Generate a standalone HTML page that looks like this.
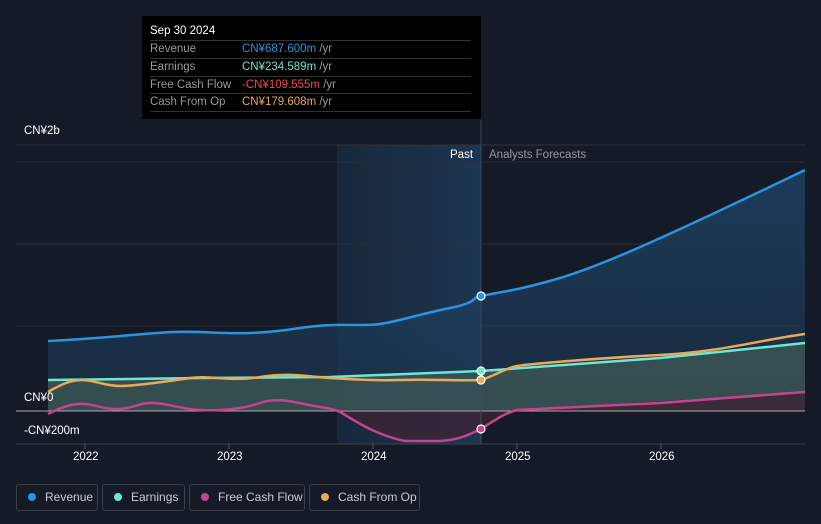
<!DOCTYPE html>
<html><head><meta charset="utf-8"><style>
body{margin:0;background:#151b26;width:821px;height:524px;overflow:hidden;font-family:"Liberation Sans",sans-serif;position:relative}
.t{position:absolute;font-size:11.5px;color:#fff;white-space:nowrap}
.tip{position:absolute;left:142px;top:16px;width:339px;height:103px;background:#000}
.tip .r{position:absolute;left:8px;width:321px;font-size:11.5px;color:#999;border-top:1px solid #333;height:17px;line-height:17px;white-space:nowrap}
.tip .r span{position:absolute;left:92px}
.lg{position:absolute;top:484px;height:27px;border:1px solid #3a3f4a;border-radius:3px;font-size:12px;color:#ccc;line-height:25px;box-sizing:border-box;white-space:nowrap}
.lg i{position:absolute;left:11px;top:8px;width:8px;height:8px;border-radius:50%}
.lg b{font-weight:normal;position:absolute;left:28px}
</style></head><body>
<svg width="821" height="524" style="position:absolute;left:0;top:0">
<defs>
<linearGradient id="rg" x1="0" y1="0" x2="0" y2="1"><stop offset="0" stop-color="#1f4a70" stop-opacity=".7"/><stop offset="1" stop-color="#1b3550" stop-opacity=".6"/></linearGradient>
<linearGradient id="hg" x1="0" y1="0" x2="1" y2="0"><stop offset="0" stop-color="#17273a"/><stop offset="1" stop-color="#1d3650"/></linearGradient>
</defs>
<rect x="337" y="145" width="144" height="299" fill="url(#hg)"/>
<line x1="16" y1="145" x2="805" y2="145" stroke="#2c3340"/>
<line x1="16" y1="162" x2="805" y2="162" stroke="#262c38"/>
<line x1="16" y1="244" x2="805" y2="244" stroke="#262c38"/>
<line x1="16" y1="326" x2="805" y2="326" stroke="#262c38"/>
<line x1="16" y1="444" x2="805" y2="444" stroke="#3a404c"/>
<path d="M48,341 C120,338 160,330 200,332 S260,334 300,328 S360,327 380,324 S420,314 450,308 S470,298 481,296 C500,292 520,290 560,278 S660,240 805,170 L805,411 L48,411Z" fill="url(#rg)"/>
<path d="M48,380 L200,378 L330,377 L481,371 L660,358 L805,343 L805,411 L48,411Z" fill="#3e5a55" opacity=".75"/>
<path d="M335,410 C350,418 370,430 405,441 L440,441 C460,440 470,434 481,429 C495,420 505,413 517,410 L805,392 L805,411 Z" fill="#3a2434" opacity=".8"/>
<line x1="16" y1="411" x2="805" y2="411" stroke="#aaa" stroke-width="1"/>
<line x1="481" y1="120" x2="481" y2="444" stroke="#3a4a5c"/>
<path d="M48,341 C120,338 160,330 200,332 S260,334 300,328 S360,327 380,324 S420,314 450,308 S470,298 481,296 C500,292 520,290 560,278 S660,240 805,170" fill="none" stroke="#2b94e0" stroke-width="2.5"/>
<path d="M48,380 L200,378 L330,377 L481,371 L660,358 L805,343" fill="none" stroke="#6ee6d2" stroke-width="2.5"/>
<path d="M48,392 C60,385 70,380 82,380 S105,386 120,386 S170,381 190,378 S230,382 260,377 S310,377 330,378 S370,381 400,380 S460,381 481,380 C495,376 505,368 517,366 S600,358 660,355 S760,340 805,334" fill="none" stroke="#e9a95a" stroke-width="2.5"/>
<path d="M48,414 C60,408 72,403 85,404 S105,410 120,409 S140,402 155,403 S180,409 200,410 S240,410 260,403 S300,404 320,407 S340,412 350,418 S380,436 405,441 L440,441 C460,440 470,434 481,429 C495,420 505,413 517,410 L660,403 L805,392" fill="none" stroke="#c8448a" stroke-width="2.5"/>
<circle cx="481" cy="296" r="4" fill="#2b94e0" stroke="#fff" stroke-width="1.2"/>
<circle cx="481" cy="371" r="4" fill="#6ee6d2" stroke="#fff" stroke-width="1.2"/>
<circle cx="481" cy="380" r="4" fill="#e9a95a" stroke="#fff" stroke-width="1.2"/>
<circle cx="481" cy="429" r="4" fill="#c8448a" stroke="#fff" stroke-width="1.2"/>
<g stroke="#555"><line x1="85" y1="444" x2="85" y2="449"/><line x1="229" y1="444" x2="229" y2="449"/><line x1="373" y1="444" x2="373" y2="449"/><line x1="517" y1="444" x2="517" y2="449"/><line x1="661" y1="444" x2="661" y2="449"/></g>
</svg>
<div class="t" style="left:24px;top:125px">CN¥2b</div>
<div class="t" style="left:24px;top:392px">CN¥0</div>
<div class="t" style="left:24px;top:425px">-CN¥200m</div>
<div class="t" style="left:450px;top:149px">Past</div>
<div class="t" style="left:489px;top:149px;color:#999">Analysts Forecasts</div>
<div class="t" style="left:73px;top:451px">2022</div>
<div class="t" style="left:217px;top:451px">2023</div>
<div class="t" style="left:361px;top:451px">2024</div>
<div class="t" style="left:505px;top:451px">2025</div>
<div class="t" style="left:649px;top:451px">2026</div>
<div class="tip">
<div style="position:absolute;left:8px;top:9px;font-size:11.5px;color:#fff">Sep 30 2024</div>
<div class="r" style="top:24px">Revenue<span style="color:#2b94e0">CN¥687.600m <em style="font-style:normal;color:#999">/yr</em></span></div>
<div class="r" style="top:42px">Earnings<span style="color:#6ee6d2">CN¥234.589m <em style="font-style:normal;color:#999">/yr</em></span></div>
<div class="r" style="top:60px">Free Cash Flow<span style="color:#f04848">-CN¥109.555m <em style="font-style:normal;color:#999">/yr</em></span></div>
<div class="r" style="top:77px;border-bottom:1px solid #333">Cash From Op<span style="color:#e9a95a">CN¥179.608m <em style="font-style:normal;color:#999">/yr</em></span></div>
</div>
<div class="lg" style="left:16px;width:82px"><i style="background:#2b94e0"></i><b>Revenue</b></div>
<div class="lg" style="left:102px;width:83px"><i style="background:#6ee6d2"></i><b>Earnings</b></div>
<div class="lg" style="left:189px;width:116px"><i style="background:#c8448a"></i><b>Free Cash Flow</b></div>
<div class="lg" style="left:309px;width:111px"><i style="background:#e9a95a"></i><b>Cash From Op</b></div>
</body></html>
